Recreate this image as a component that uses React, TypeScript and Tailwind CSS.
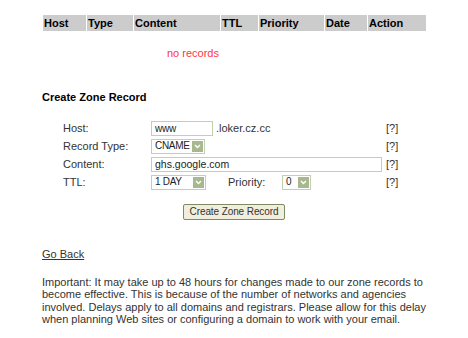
const columns = [
  { label: 'Host', w: 'w-[43px]' },
  { label: 'Type', w: 'w-[46px]' },
  { label: 'Content', w: 'w-[86px]' },
  { label: 'TTL', w: 'w-[37px]' },
  { label: 'Priority', w: 'w-[65px]' },
  { label: 'Date', w: 'w-[42px]' },
  { label: 'Action', w: 'w-[58px]' },
];

function FakeSelect({ value, w }: { value: string; w: string }) {
  return (
    <div className={`${w} h-[15px] border border-[#c3cfb3] bg-white flex items-center justify-between pl-[3px] pr-px`}>
      <span className="leading-none text-[10px] tracking-[-0.3px] text-[#222]">{value}</span>
      <span className="w-[11px] h-[11px] bg-[#a7b78e] flex items-center justify-center">
        <svg width="7" height="5" viewBox="0 0 7 5">
          <path d="M1 1 L3.5 3.5 L6 1" stroke="#fff" strokeWidth="1.4" fill="none" />
        </svg>
      </span>
    </div>
  );
}

function Row({ label, children }: { label: string; children: React.ReactNode }) {
  return (
    <div className="flex items-center h-[18px]">
      <span className="w-[88px] text-[#333]">{label}</span>
      <div className="w-[235px] flex items-center">{children}</div>
      <span className="text-[#333]">[?]</span>
    </div>
  );
}

export default function App() {
  return (
    <div className="w-[468px] h-[338px] bg-white text-[11px] leading-[13px] text-[#333] overflow-hidden" style={{ fontFamily: '"Liberation Sans", Arial, sans-serif' }}>
      <div className="pt-[15px] pl-[43px] flex gap-px">
        {columns.map((c) => (
          <div key={c.label} className={`${c.w} h-[16px] bg-[#cccccc] font-bold text-black flex items-center pl-px`}>
            {c.label}
          </div>
        ))}
      </div>

      <div className="mt-[16px] pl-[167px] text-[#ff3344]">no records</div>

      <div className="mt-[31px] pl-[42px] font-bold text-black">Create Zone Record</div>

      <div className="mt-[15px] pl-[63px] flex flex-col">
        <Row label="Host:">
          <div className="w-[62px] h-[15px] border border-[#c3cfb3] pl-[3px] flex items-center text-[10px] tracking-[-0.2px] text-[#222]">www</div>
          <span className="ml-[3px]">.loker.cz.cc</span>
        </Row>
        <Row label="Record Type:">
          <FakeSelect value="CNAME" w="w-[54px]" />
        </Row>
        <Row label="Content:">
          <div className="w-[231px] h-[15px] border border-[#c3cfb3] pl-[3px] flex items-center text-[10.5px] text-[#222]">ghs.google.com</div>
        </Row>
        <Row label="TTL:">
          <FakeSelect value="1 DAY" w="w-[55px]" />
          <span className="ml-[22px] w-[54px]">Priority:</span>
          <FakeSelect value="0" w="w-[29px]" />
        </Row>
      </div>

      <div className="mt-[13px] flex justify-center">
        <button className="w-[102px] h-[16px] border border-[#7d8b64] rounded-[2px] bg-[#f2eedc] text-[10px] tracking-[-0.1px] leading-none text-[#333]">
          Create Zone Record
        </button>
      </div>

      <div className="mt-[28px] pl-[42px]">
        <a className="underline text-[#333]">Go Back</a>
      </div>

      <p className="mt-[15px] pl-[42px] w-[430px] leading-[12.4px]">
        Important: It may take up to 48 hours for changes made to our zone records to become effective. This is because of the number of networks and agencies involved. Delays apply to all domains and registrars. Please allow for this delay when planning Web sites or configuring a domain to work with your email.
      </p>
    </div>
  );
}
